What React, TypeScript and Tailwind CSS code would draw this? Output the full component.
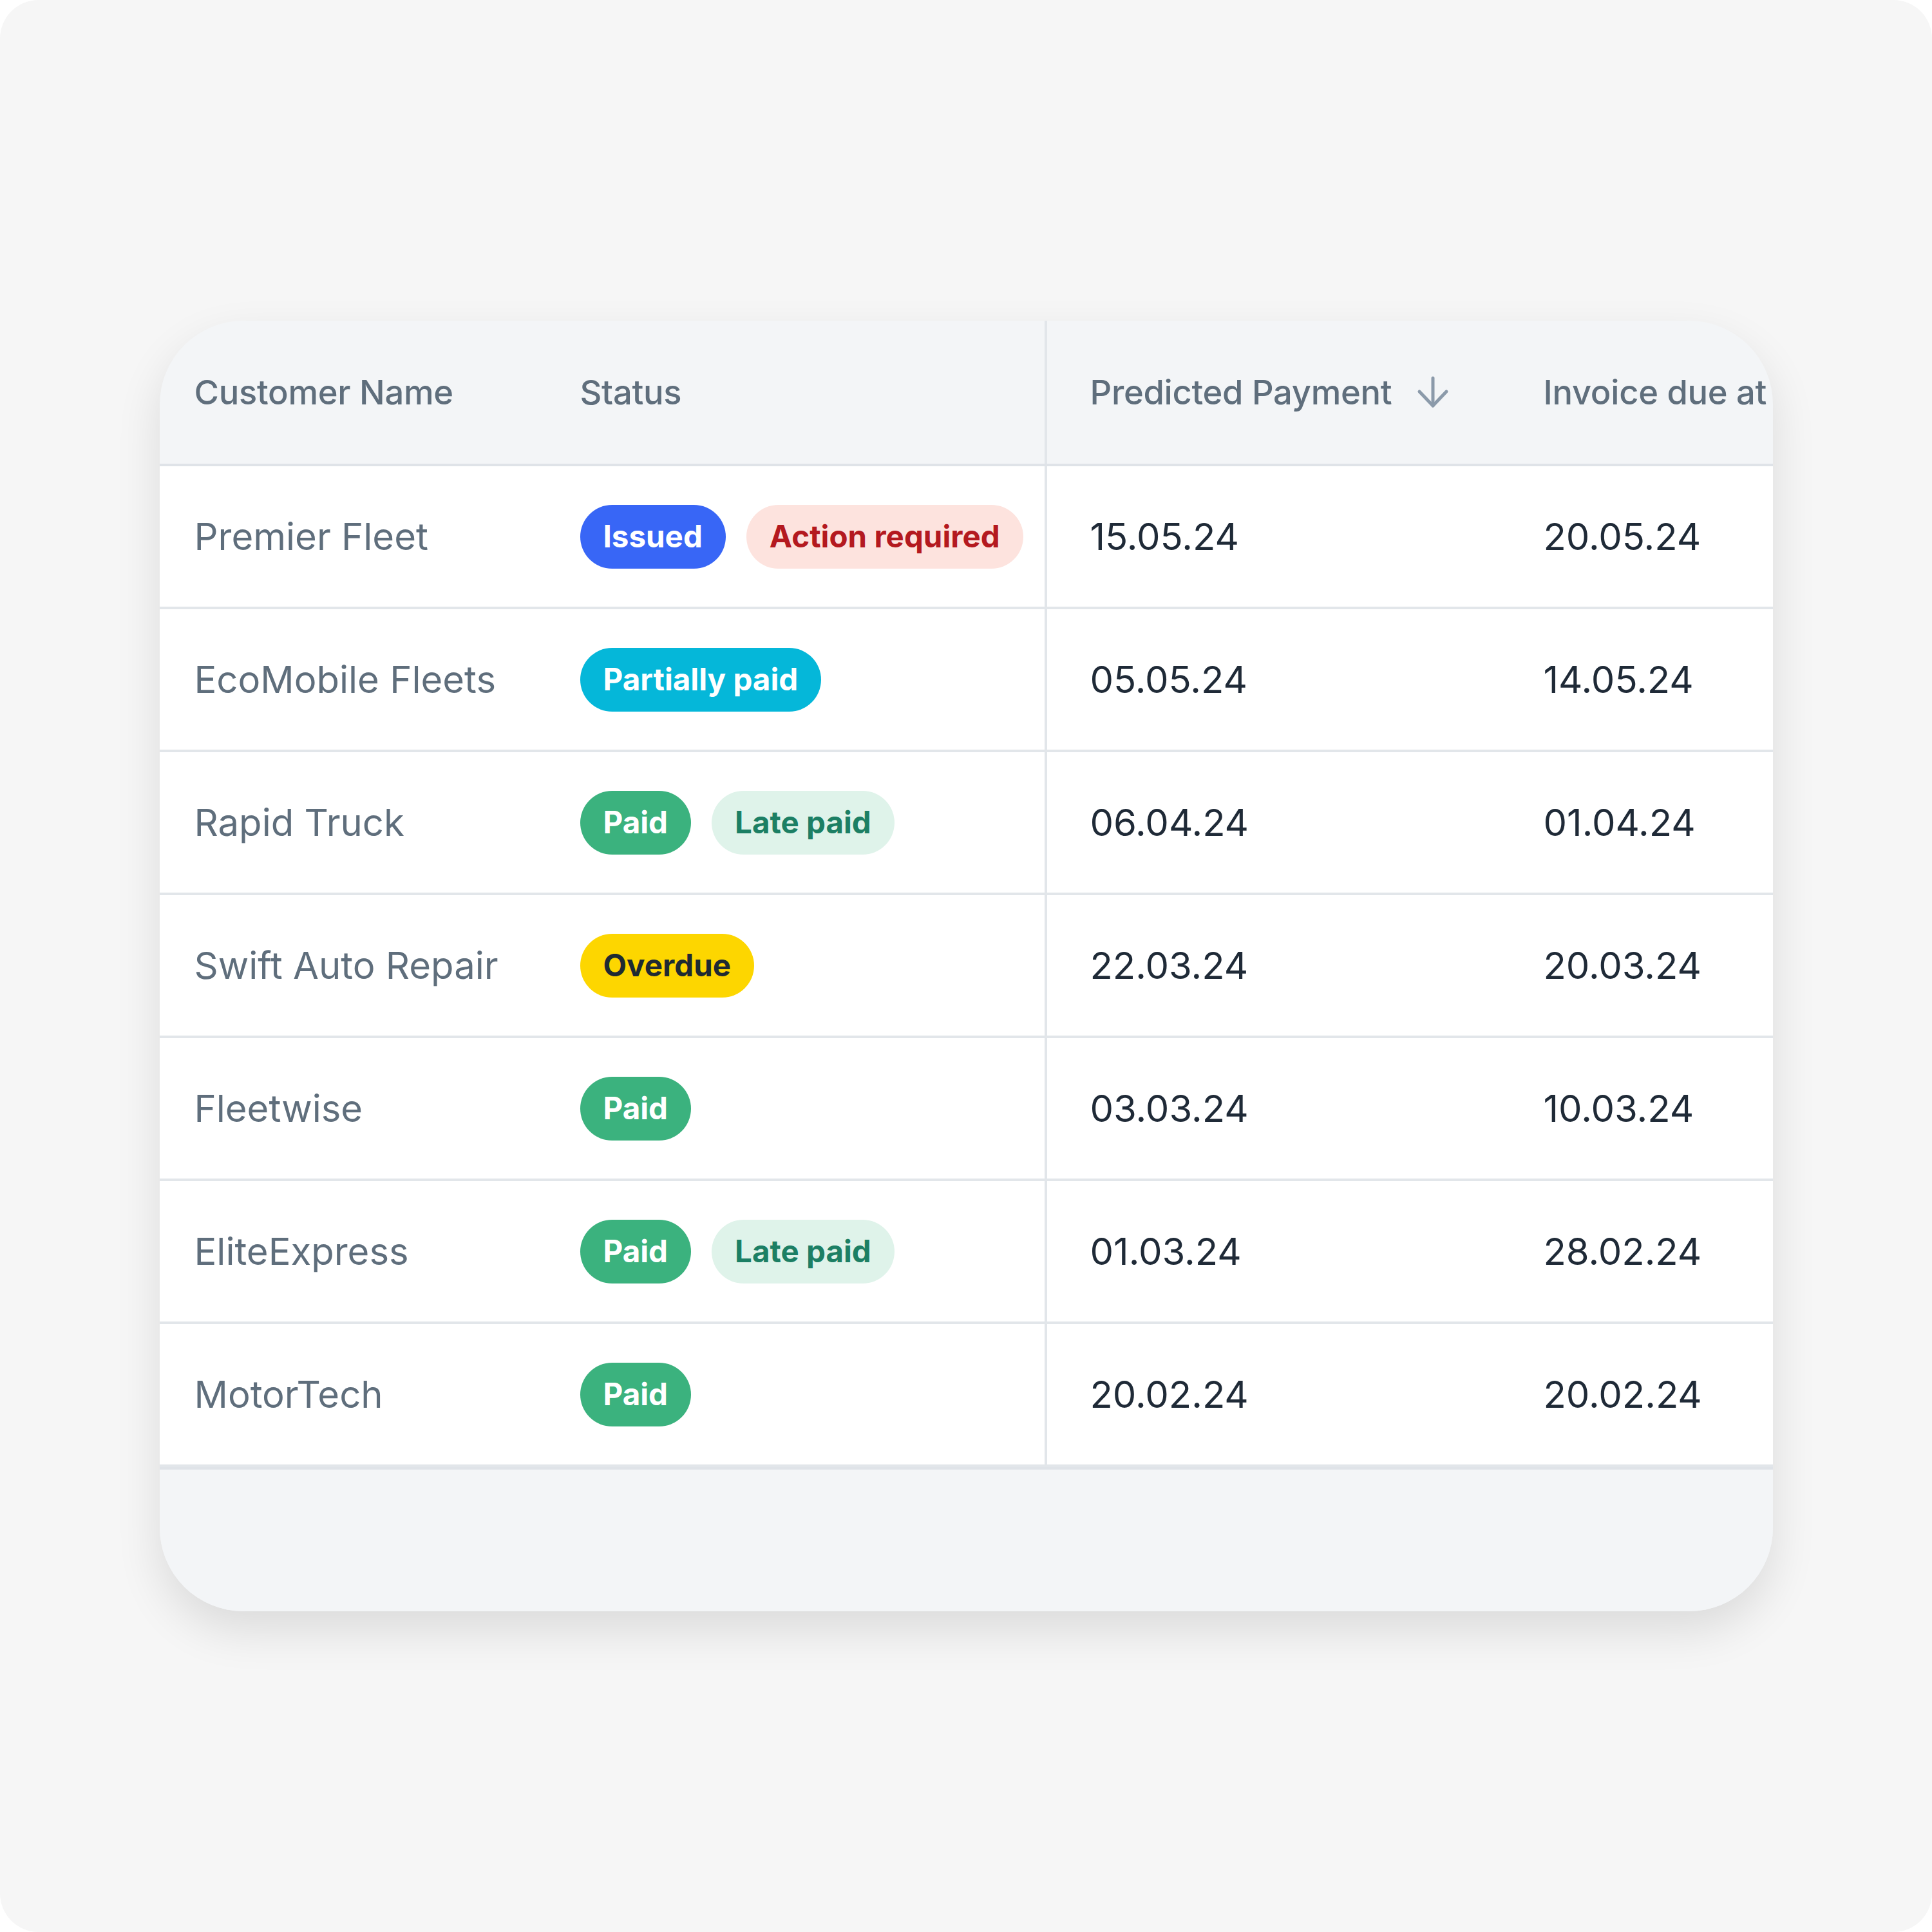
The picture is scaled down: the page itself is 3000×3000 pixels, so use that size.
import React from "react";

type Badge = { label: string; cls: string };

const B = {
  issued: { label: "Issued", cls: "bg-[#3866f6] text-white" },
  action: { label: "Action required", cls: "bg-[#fde3de] text-[#b4191f]" },
  partial: { label: "Partially paid", cls: "bg-[#05b7d9] text-white" },
  paid: { label: "Paid", cls: "bg-[#3bb27e] text-white" },
  late: { label: "Late paid", cls: "bg-[#dff3ea] text-[#1c7f64]" },
  overdue: { label: "Overdue", cls: "bg-[#fdd600] text-[#1e2a32]" },
};

const rows: { name: string; badges: Badge[]; predicted: string; due: string }[] = [
  { name: "Premier Fleet", badges: [B.issued, B.action], predicted: "15.05.24", due: "20.05.24" },
  { name: "EcoMobile Fleets", badges: [B.partial], predicted: "05.05.24", due: "14.05.24" },
  { name: "Rapid Truck", badges: [B.paid, B.late], predicted: "06.04.24", due: "01.04.24" },
  { name: "Swift Auto Repair", badges: [B.overdue], predicted: "22.03.24", due: "20.03.24" },
  { name: "Fleetwise", badges: [B.paid], predicted: "03.03.24", due: "10.03.24" },
  { name: "EliteExpress", badges: [B.paid, B.late], predicted: "01.03.24", due: "28.02.24" },
  { name: "MotorTech", badges: [B.paid], predicted: "20.02.24", due: "20.02.24" },
];

const font = { fontFamily: "Inter, 'Noto Sans', sans-serif" };

export default function App() {
  return (
    <div className="w-[3000px] h-[3000px] bg-white" style={font}>
      <div className="w-full h-full rounded-[60px] bg-[#f6f6f6] flex items-center justify-center">
        <div className="w-[2505px] h-[2004px] rounded-[130px] bg-[#f3f5f7] overflow-hidden shadow-[0_30px_70px_rgba(0,0,0,0.11)] flex flex-col">
          {/* Header */}
          <div className="grid grid-cols-[653px_721px_775px_1fr] h-[226px] border-b-4 border-[#dfe3e8] text-[52.5px] font-medium text-[#5f6e7c] tracking-[-0.3px]">
            <div className="pl-[54px] flex items-center whitespace-nowrap">Customer Name</div>
            <div className="flex items-center">Status</div>
            <div className="border-l-4 border-[#e2e6ea] pl-[67px] flex items-center gap-[39px] whitespace-nowrap">
              <span>Predicted Payment</span>
              <svg width="50" height="50" viewBox="0 0 50 50" fill="none" stroke="#8b9aaa" strokeWidth="5" strokeLinecap="round" strokeLinejoin="round">
                <path d="M25 3v43" />
                <path d="M4 24l21 22 21-22" />
              </svg>
            </div>
            <div className="flex items-center whitespace-nowrap">Invoice due at</div>
          </div>
          {/* Rows */}
          {rows.map((r) => (
            <div
              key={r.name}
              className="grid grid-cols-[653px_721px_775px_1fr] h-[222px] border-b-4 border-[#e2e6ea] bg-white text-[58px]"
            >
              <div className="pl-[54px] flex items-center text-[#5f6e7c] whitespace-nowrap">{r.name}</div>
              <div className="flex items-center gap-[32px]">
                {r.badges.map((b) => (
                  <span
                    key={b.label}
                    className={`h-[99px] px-[36px] rounded-full flex items-center text-[47.5px] font-bold whitespace-nowrap ${b.cls}`}
                  >
                    {b.label}
                  </span>
                ))}
              </div>
              <div className="border-l-4 border-[#e2e6ea] pl-[67px] flex items-center text-[#1f2a37]">{r.predicted}</div>
              <div className="flex items-center text-[#1f2a37]">{r.due}</div>
            </div>
          ))}
          <div className="flex-1 border-t-4 border-[#dfe3e8] bg-[#f3f5f7]" />
        </div>
      </div>
    </div>
  );
}
